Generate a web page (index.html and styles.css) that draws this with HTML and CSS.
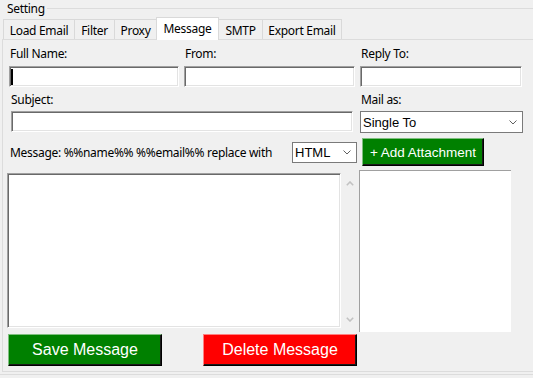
FILE: index.html
```html
<!DOCTYPE html>
<html>
<head>
<meta charset="utf-8">
<link rel="stylesheet" href="styles.css">
</head>
<body>
<div class="window">
  <div class="group-title"><span class="group-label">Setting</span></div>
  <div class="tabs">
    <div class="tab t-load">Load Email</div>
    <div class="tab t-filter">Filter</div>
    <div class="tab t-proxy">Proxy</div>
    <div class="tab t-message active">Message</div>
    <div class="tab t-smtp">SMTP</div>
    <div class="tab t-export">Export Email</div>
  </div>
  <div class="panel">
    <div class="row row1">
      <div class="field f-name">
        <div class="lbl">Full Name:</div>
        <div class="tb"><span class="caret"></span></div>
      </div>
      <div class="field f-from">
        <div class="lbl">From:</div>
        <div class="tb"></div>
      </div>
      <div class="field f-reply">
        <div class="lbl">Reply To:</div>
        <div class="tb"></div>
      </div>
    </div>
    <div class="row row2">
      <div class="field f-subject">
        <div class="lbl">Subject:</div>
        <div class="tb tb-subject"></div>
      </div>
      <div class="field f-mailas">
        <div class="lbl">Mail as:</div>
        <div class="dd dd-mailas"><span>Single To</span>
          <svg class="chev" width="8" height="5" viewBox="0 0 8 5"><path d="M0.5 0.5 L4 4 L7.5 0.5" fill="none" stroke="#606060" stroke-width="1"/></svg>
        </div>
      </div>
    </div>
    <div class="row row3">
      <div class="msg-lbl">Message: %%name%% %%email%% replace with</div>
      <div class="dd dd-html"><span>HTML</span>
        <svg class="chev" width="8" height="5" viewBox="0 0 8 5"><path d="M0.5 0.5 L4 4 L7.5 0.5" fill="none" stroke="#606060" stroke-width="1"/></svg>
      </div>
      <div class="btn btn-green btn-attach">+ Add Attachment</div>
    </div>
    <div class="row row4">
      <div class="msgwrap">
        <div class="msgbox"></div>
        <div class="vscroll">
          <svg width="8" height="5" viewBox="0 0 8 5"><path d="M0.8 4.2 L4 1 L7.2 4.2" fill="none" stroke="#c2c2c2" stroke-width="1.6"/></svg>
          <svg width="8" height="5" viewBox="0 0 8 5"><path d="M0.8 0.8 L4 4 L7.2 0.8" fill="none" stroke="#c2c2c2" stroke-width="1.6"/></svg>
        </div>
      </div>
      <div class="listbox"></div>
    </div>
    <div class="row row5">
      <div class="btn btn-green btn-big btn-save">Save Message</div>
      <div class="btn btn-red btn-big btn-delete">Delete Message</div>
    </div>
  </div>
  <div class="group-bottom"></div>
</div>
</body>
</html>
```
FILE: styles.css
```css
* { box-sizing: border-box; }
html, body {
  margin: 0;
  padding: 0;
  background: #f0f0f0;
  width: 533px;
  height: 378px;
  overflow: hidden;
}
.window {
  font-family: "Noto Sans", "Open Sans", sans-serif;
  font-size: 12px;
  letter-spacing: -0.3px;
  color: #000;
  width: 540px;
}
.group-title {
  display: flex;
  align-items: center;
  height: 17px;
  padding-left: 7px;
}
.group-label {
  line-height: 15px;
  margin-top: -1px;
}
.group-title::after {
  content: "";
  flex: 1;
  border-top: 1px solid #dcdcdc;
  margin-left: 2px;
}
.tabs {
  display: flex;
  align-items: flex-end;
  height: 22px;
  padding-left: 3px;
  position: relative;
  z-index: 1;
}
.tab {
  height: 20px;
  border: 1px solid #d9d9d9;
  border-bottom: none;
  border-right: none;
  background: #f0f0f0;
  display: flex;
  align-items: center;
  justify-content: center;
  line-height: 15px;
  padding-top: 1px;
}
.tab.active {
  height: 23px;
  margin-bottom: -1px;
  background: #fff;
  border-right: 1px solid #d9d9d9;
  padding-top: 0;
  padding-bottom: 2px;
}
.t-load { width: 71px; }
.t-filter { width: 40px; }
.t-proxy { width: 42px; }
.t-message { width: 63px; }
.t-smtp { width: 43px; border-left: none !important; }
.t-export { width: 80px; border-right: 1px solid #d9d9d9 !important; }
.panel {
  margin-left: 2px;
  height: 333px;
  border: 1px solid #dcdcdc;
  border-right: none;
}
.group-bottom {
  margin-top: 2px;
  border-top: 1px solid #dcdcdc;
}
.row { display: flex; align-items: flex-start; }
.lbl { line-height: 15px; padding-left: 1px; }
.tb {
  height: 21px;
  background: #fff;
  border: 1px solid;
  border-color: #a0a0a0 #fff #fff #a0a0a0;
  box-shadow: inset 1px 1px 0 #696969, inset -1px -1px 0 #e3e3e3;
  display: flex;
  align-items: flex-start;
}
.caret {
  width: 2px;
  height: 16px;
  background: #000;
  margin-left: 1px;
  margin-top: 2px;
}
.row1 { margin-top: 6px; }
.row1 .tb { margin-top: 5px; }
.f-name { margin-left: 6px; width: 170px; }
.f-from { margin-left: 5px; width: 171px; }
.f-reply { margin-left: 5px; width: 162px; }
.row2 { margin-top: 5px; height: 40px; }
.f-subject { margin-left: 7px; width: 343px; }
.tb-subject { margin-left: 1px; width: 342px; margin-top: 4px; }
.f-mailas { margin-left: 7px; width: 163px; }
.dd {
  background: #fff;
  border: 1px solid #7a7a7a;
  display: flex;
  align-items: center;
  justify-content: space-between;
  font-family: "Liberation Sans", Arial, sans-serif;
  font-size: 13px;
  letter-spacing: 0;
}
.dd-mailas { margin-top: 4px; height: 22px; padding: 0 5px 0 2px; }
.row3 { margin-top: 6px; height: 28px; align-items: center; }
.msg-lbl { margin-left: 7px; width: 282px; line-height: 15px; }
.dd-html { width: 65px; height: 21px; padding: 0 5px 0 2px; }
.btn {
  display: flex;
  align-items: center;
  justify-content: center;
  color: #fff;
  font-family: "Liberation Sans", Arial, sans-serif;
  letter-spacing: 0;
  border: 1px solid;
}
.btn-green {
  background: #008000;
  border-color: #7fbf7f #000 #000 #7fbf7f;
  box-shadow: inset -1px -1px 0 #1a1a1a;
}
.btn-red {
  background: #ff0000;
  border-color: #ff8080 #000 #000 #ff8080;
  box-shadow: inset -1px -1px 0 #1a1a1a;
}
.btn-attach {
  margin-left: 5px;
  width: 122px;
  height: 28px;
  font-size: 13.5px;
}
.row4 { margin-top: 4px; }
.msgwrap { display: flex; margin-left: 4px; margin-top: 3px; }
.msgbox {
  width: 334px;
  height: 155px;
  background: #fff;
  border: 1px solid;
  border-color: #a0a0a0 #fff #fff #a0a0a0;
  box-shadow: inset 1px 1px 0 #696969, inset -1px -1px 0 #e3e3e3;
}
.vscroll {
  width: 16px;
  height: 155px;
  display: flex;
  flex-direction: column;
  justify-content: space-between;
  align-items: center;
  padding: 8px 0 6px 2px;
}
.vscroll svg { display: block; }
.listbox {
  margin-left: 2px;
  width: 152px;
  height: 162px;
  background: #fff;
  border-top: 1px solid #a0a0a0;
  border-left: 1px solid #a0a0a0;
}
.row5 { margin-top: 2px; }
.btn-big { width: 154px; height: 32px; font-size: 16px; }
.btn-save { margin-left: 5px; }
.btn-delete { margin-left: 41px; }
```
